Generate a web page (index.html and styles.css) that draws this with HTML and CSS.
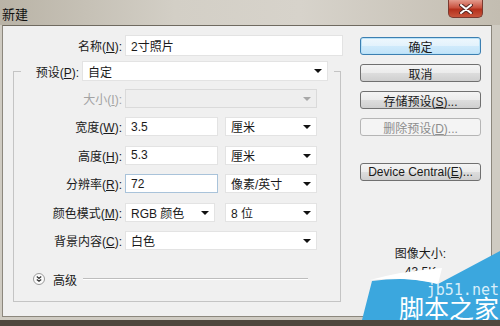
FILE: index.html
```html
<!DOCTYPE html>
<html lang="zh-CN">
<head>
    <meta charset="UTF-8">
    <title>新建</title>
    <link rel="stylesheet" href="styles.css">
</head>
<body>
    <div class="window">
        <div class="titlebar">
            <span class="title">新建</span>
            <div class="close">
                <svg width="14" height="10" viewBox="0 0 14 10">
                    <path d="M2 1 L12 9 M12 1 L2 9" stroke="#5a2a24" stroke-width="4" stroke-linecap="round"/>
                    <path d="M2 1 L12 9 M12 1 L2 9" stroke="#fff" stroke-width="2" stroke-linecap="round"/>
                </svg>
            </div>
        </div>

        <div class="frame">
            <div class="dialog">
                <div class="form">
                    <div class="row name-row">
                        <span class="lbl">名称(<u>N</u>):</span>
                        <div class="field input name-field">2寸照片</div>
                    </div>

                    <fieldset class="group">
                        <legend class="preset">
                            <span class="lbl preset-lbl">预设(<u>P</u>):</span>
                            <div class="field select preset-field">自定<i class="arrow"></i></div>
                        </legend>

                        <div class="rows">
                            <div class="row">
                                <span class="lbl disabled">大小(<u>I</u>):</span>
                                <div class="field select full off"><i class="arrow"></i></div>
                            </div>
                            <div class="row">
                                <span class="lbl">宽度(<u>W</u>):</span>
                                <div class="field input num">3.5</div>
                                <div class="field select unit">厘米<i class="arrow"></i></div>
                            </div>
                            <div class="row">
                                <span class="lbl">高度(<u>H</u>):</span>
                                <div class="field input num">5.3</div>
                                <div class="field select unit">厘米<i class="arrow"></i></div>
                            </div>
                            <div class="row">
                                <span class="lbl">分辨率(<u>R</u>):</span>
                                <div class="field input num focus">72</div>
                                <div class="field select unit">像素/英寸<i class="arrow"></i></div>
                            </div>
                            <div class="row">
                                <span class="lbl">颜色模式(<u>M</u>):</span>
                                <div class="field select mode">RGB 颜色<i class="arrow"></i></div>
                                <div class="field select unit">8 位<i class="arrow"></i></div>
                            </div>
                            <div class="row">
                                <span class="lbl">背景内容(<u>C</u>):</span>
                                <div class="field select full">白色<i class="arrow"></i></div>
                            </div>
                        </div>

                        <div class="advanced">
                            <span class="toggle">
                                <svg width="12" height="12" viewBox="0 0 12 12">
                                    <circle cx="6" cy="6" r="5.5" fill="#fbfbfb" stroke="#9a9a9a"/>
                                    <path d="M3.8 3.6 L6 5.4 L8.2 3.6 M3.8 6.4 L6 8.2 L8.2 6.4" fill="none" stroke="#333" stroke-width="1.3"/>
                                </svg>
                            </span>
                            <span class="adv-text">高级</span>
                            <span class="adv-line"></span>
                        </div>
                    </fieldset>
                </div>

                <div class="buttons">
                    <button class="btn primary">确定</button>
                    <button class="btn">取消</button>
                    <button class="btn">存储预设(<u>S</u>)...</button>
                    <button class="btn" disabled>删除预设(<u>D</u>)...</button>
                    <button class="btn device">Device Central(<u>E</u>)...</button>
                    <div class="info">
                        <div>图像大小:</div>
                        <div class="size">43.5K</div>
                    </div>
                </div>
            </div>
        </div>

        <!-- 水印 -->
        <svg class="watermark" width="140" height="70" viewBox="0 0 140 70">
            <path d="M140 1 L140 70 L2 70 L12 31 Q50 26 78 34 Z" fill="#3ba7de"/>
            <path d="M10 30 Q42 21 82 18 L78 34 Q45 26 10 30 Z" fill="#ffffff"/>
            <text x="139" y="45" text-anchor="end" class="wm-url">jb51.net</text>
            <text x="139" y="68" text-anchor="end" class="wm-name">脚本之家</text>
        </svg>
    </div>
</body>
</html>
```

FILE: styles.css
```css
/* 기본 */
body {
    margin: 0;
    width: 500px;
    height: 326px;
    overflow: hidden;
    font-family: "Liberation Sans", "Noto Sans CJK SC", sans-serif;
    font-size: 12px;
    color: #1a1a1a;
}

.window {
    position: relative;
    width: 500px;
    height: 326px;
    background: #cfcbc2;
    border-bottom: 6px solid #4f463d;
    box-sizing: border-box;
}

/* 标题栏 */
.titlebar {
    height: 25px;
    display: flex;
    justify-content: space-between;
    align-items: flex-start;
    background: linear-gradient(90deg, #b9b3a6 0%, #d3cfc6 35%, #d7d3cb 60%, #c3bdb1 100%);
}

.title {
    padding: 4px 0 0 2px;
    font-size: 13px;
    color: #111;
}

.close {
    width: 35px;
    height: 18px;
    margin-right: 17px;
    display: flex;
    align-items: center;
    justify-content: center;
    background: linear-gradient(#e39a8c, #c9523f 45%, #b4301c 55%, #c8553c);
    border: 1px solid #7a3a30;
    border-top: none;
    border-radius: 0 0 5px 5px;
    box-sizing: border-box;
}

/* 窗口主体 */
.frame {
    padding: 0 8px 3px 2px;
}

.dialog {
    display: flex;
    height: 292px;
    padding: 9px 10px 0 0;
    box-sizing: border-box;
    background: #f0f0f0;
    border: 1px solid #8c877d;
    border-top-color: #6f6a60;
}

.form {
    width: 340px;
}

.row {
    display: flex;
    align-items: center;
    height: 19px;
}

.lbl {
    width: 119px;
    margin-right: 3px;
    text-align: right;
    white-space: nowrap;
}

.lbl.disabled {
    color: #a3a3a3;
}

.field {
    position: relative;
    height: 100%;
    box-sizing: border-box;
    padding-left: 5px;
    display: flex;
    align-items: center;
    background: #fff;
    border: 1px solid #e3e3e3;
}

.name-row {
    height: 21px;
}

.name-field {
    width: 218px;
}

/* 分组框 */
.group {
    margin: 5px 0 0 10px;
    width: 328px;
    height: 241px;
    padding: 0;
    box-sizing: border-box;
    border: 1px solid #c4c4c4;
}

.preset {
    display: flex;
    align-items: center;
    height: 20px;
    margin-left: 7px;
    padding: 0 6px 0 0;
}

.preset-lbl {
    width: 58px;
}

.preset-field {
    width: 246px;
    height: 20px;
}

.rows {
    display: flex;
    flex-direction: column;
    gap: 9.4px;
    padding-top: 8px;
}

.rows .lbl {
    width: 108px;
}

.num {
    width: 93px;
}

.unit {
    width: 92px;
    margin-left: 7px;
}

.mode {
    width: 90px;
}

.mode + .unit {
    margin-left: 10px;
}

.full {
    width: 192px;
}

.off {
    background: #eeeeee;
    border-color: #dadada;
}

.off .arrow {
    border-top-color: #a8a8a8;
}

.focus {
    border-color: #a9c3da;
}

.arrow {
    position: absolute;
    right: 5px;
    top: 7px;
    width: 0;
    height: 0;
    border-left: 4px solid transparent;
    border-right: 4px solid transparent;
    border-top: 4px solid #111;
}

/* 高级 */
.advanced {
    display: flex;
    align-items: center;
    margin: 23px 0 0 19px;
    height: 13px;
}

.toggle {
    display: flex;
}

.adv-text {
    margin-left: 8px;
}

.adv-line {
    width: 225px;
    margin-left: 6px;
    border-top: 1px solid #bdbdbd;
    border-bottom: 1px solid #fff;
}

/* 按钮 */
.buttons {
    width: 121px;
    margin: 2px 0 0 17px;
    display: flex;
    flex-direction: column;
    gap: 9px;
}

.btn {
    height: 18px;
    padding: 0;
    font-family: inherit;
    font-size: 12px;
    color: #1a1a1a;
    border: 1px solid #707070;
    border-radius: 3px;
    background: linear-gradient(#f4f4f4 0%, #ebebeb 50%, #dddddd 51%, #cfcfcf 100%);
}

.btn.primary {
    border-color: #3c7fb1;
    box-shadow: inset 0 0 0 1px #b9e2f8;
    background: linear-gradient(#eef7fd 0%, #e2f2fc 50%, #cfeafb 51%, #c2e3f8 100%);
}

.btn:disabled {
    color: #8d8d8d;
    border-color: #b5b5b5;
    background: #f4f4f4;
}

.btn.device {
    margin-top: 18px;
}

.info {
    margin-top: 55px;
    text-align: center;
    line-height: 18px;
}

/* 水印 */
.watermark {
    position: absolute;
    right: 0;
    bottom: 0;
}

.wm-url {
    font-family: "DejaVu Sans Mono", monospace;
    font-size: 15px;
    fill: #d7eefa;
}

.wm-name {
    font-family: "Noto Sans CJK SC", sans-serif;
    font-size: 25px;
    fill: #ffffff;
}
```
